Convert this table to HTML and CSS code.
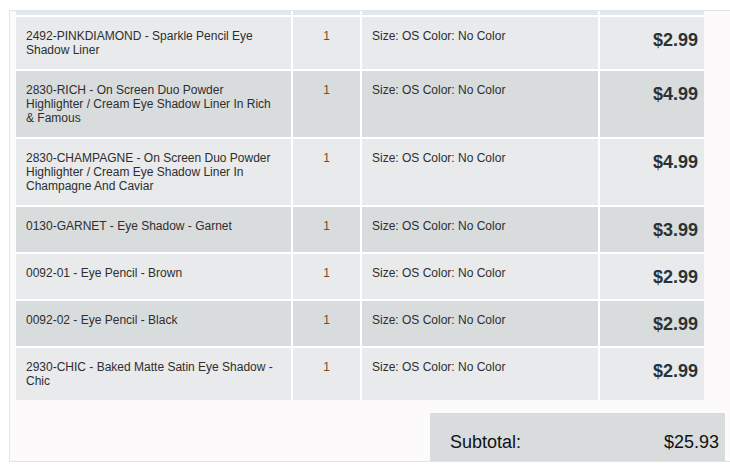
FILE: index.html
```html
<!DOCTYPE html>
<html>
<head>
<meta charset="utf-8">
<link rel="stylesheet" href="styles.css">
</head>
<body>
<div class="panel">
  <div class="items">
    <div class="cell stub"></div><div class="cell stub"></div><div class="cell stub"></div><div class="cell stub"></div>

    <div class="cell desc">2492-PINKDIAMOND - Sparkle Pencil Eye Shadow Liner</div>
    <div class="cell qty">1</div>
    <div class="cell opts">Size: OS Color: No Color</div>
    <div class="cell price">$2.99</div>

    <div class="cell desc alt">2830-RICH - On Screen Duo Powder Highlighter / Cream Eye Shadow Liner In Rich &amp; Famous</div>
    <div class="cell qty alt">1</div>
    <div class="cell opts alt">Size: OS Color: No Color</div>
    <div class="cell price alt">$4.99</div>

    <div class="cell desc">2830-CHAMPAGNE - On Screen Duo Powder Highlighter / Cream Eye Shadow Liner In Champagne And Caviar</div>
    <div class="cell qty">1</div>
    <div class="cell opts">Size: OS Color: No Color</div>
    <div class="cell price">$4.99</div>

    <div class="cell desc alt">0130-GARNET - Eye Shadow - Garnet</div>
    <div class="cell qty alt">1</div>
    <div class="cell opts alt">Size: OS Color: No Color</div>
    <div class="cell price alt">$3.99</div>

    <div class="cell desc">0092-01 - Eye Pencil - Brown</div>
    <div class="cell qty">1</div>
    <div class="cell opts">Size: OS Color: No Color</div>
    <div class="cell price">$2.99</div>

    <div class="cell desc alt">0092-02 - Eye Pencil - Black</div>
    <div class="cell qty alt">1</div>
    <div class="cell opts alt">Size: OS Color: No Color</div>
    <div class="cell price alt">$2.99</div>

    <div class="cell desc">2930-CHIC - Baked Matte Satin Eye Shadow - Chic</div>
    <div class="cell qty">1</div>
    <div class="cell opts">Size: OS Color: No Color</div>
    <div class="cell price">$2.99</div>
  </div>

  <div class="subtotal">
    <span class="sub-label">Subtotal:</span>
    <span class="sub-value">$25.93</span>
  </div>
</div>
</body>
</html>
```

FILE: styles.css
```css
html, body {
  margin: 0;
  padding: 0;
  background: #ffffff;
  overflow: hidden;
  width: 730px;
  height: 466px;
}

body {
  font-family: "Liberation Sans", Arial, Helvetica, sans-serif;
}

.panel {
  margin: 10px 0 0 9px;
  width: 740px;
  height: 450px;
  border: 1px solid #dfe5ea;
  border-right: none;
  background: #fcfafb;
  overflow: hidden;
}

.items {
  display: grid;
  grid-template-columns: 275px 67px 236px 104px;
  gap: 2px;
  width: 688px;
  margin-left: 6px;
  background: #ffffff;
}

.cell {
  background: #e8eaec;
  font-size: 12px;
  line-height: 14px;
  color: #2e2e2e;
}

.cell.alt {
  background: #d9dcdd;
}

.cell.stub {
  height: 4px;
  background: #e3e7ea;
}

.desc {
  padding: 12px 12px 12px 10px;
}

.qty {
  padding: 12px 0;
  text-align: center;
  color: #7b4a22;
}

.opts {
  padding: 12px 8px 12px 10px;
}

.price {
  padding: 12px 6px 11px 0;
  text-align: right;
  font-size: 18px;
  line-height: 22px;
  font-weight: bold;
  color: #2a3236;
}

.subtotal {
  margin: 13px 0 0 420px;
  width: 295px;
  box-sizing: border-box;
  padding: 18px 6px 20px 20px;
  background: #d9dcdd;
  display: flex;
  justify-content: space-between;
  font-size: 18px;
  line-height: 22px;
  color: #111111;
}
```
